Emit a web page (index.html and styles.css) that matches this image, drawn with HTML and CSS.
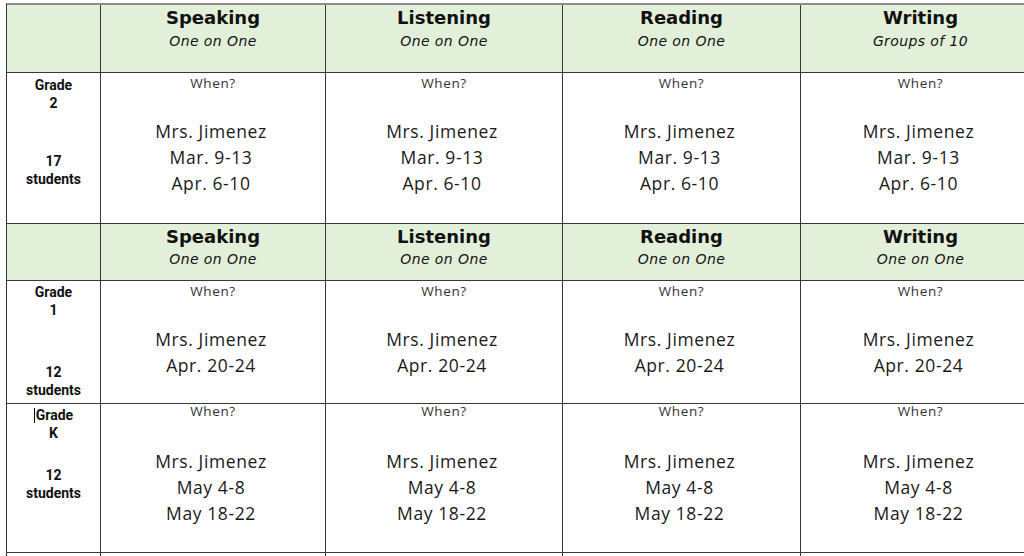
FILE: index.html
```html
<!DOCTYPE html>
<html lang="en">
<head>
<meta charset="utf-8">
<title>Assessment schedule</title>
<link rel="stylesheet" href="styles.css">
</head>
<body>
<div class="sheet">
  <!-- Header 1 -->
  <div class="cell head head-tall"></div>
  <div class="cell head head-tall"><div class="skill">Speaking</div><div class="mode">One on One</div></div>
  <div class="cell head head-tall"><div class="skill">Listening</div><div class="mode">One on One</div></div>
  <div class="cell head head-tall"><div class="skill">Reading</div><div class="mode">One on One</div></div>
  <div class="cell head head-tall"><div class="skill">Writing</div><div class="mode">Groups of 10</div></div>

  <!-- Grade 2 -->
  <div class="cell grade row-g2"><div>Grade</div><div>2</div><div class="gap-g2">17</div><div>students</div></div>
  <div class="cell slot row-g2"><div class="when">When?</div><div class="who"><div>Mrs. Jimenez</div><div>Mar. 9-13</div><div>Apr. 6-10</div></div></div>
  <div class="cell slot row-g2"><div class="when">When?</div><div class="who"><div>Mrs. Jimenez</div><div>Mar. 9-13</div><div>Apr. 6-10</div></div></div>
  <div class="cell slot row-g2"><div class="when">When?</div><div class="who"><div>Mrs. Jimenez</div><div>Mar. 9-13</div><div>Apr. 6-10</div></div></div>
  <div class="cell slot row-g2"><div class="when">When?</div><div class="who"><div>Mrs. Jimenez</div><div>Mar. 9-13</div><div>Apr. 6-10</div></div></div>

  <!-- Header 2 -->
  <div class="cell head head-short"></div>
  <div class="cell head head-short"><div class="skill">Speaking</div><div class="mode">One on One</div></div>
  <div class="cell head head-short"><div class="skill">Listening</div><div class="mode">One on One</div></div>
  <div class="cell head head-short"><div class="skill">Reading</div><div class="mode">One on One</div></div>
  <div class="cell head head-short"><div class="skill">Writing</div><div class="mode">One on One</div></div>

  <!-- Grade 1 -->
  <div class="cell grade row-g1"><div>Grade</div><div>1</div><div class="gap-g1">12</div><div>students</div></div>
  <div class="cell slot row-g1"><div class="when">When?</div><div class="who"><div>Mrs. Jimenez</div><div>Apr. 20-24</div></div></div>
  <div class="cell slot row-g1"><div class="when">When?</div><div class="who"><div>Mrs. Jimenez</div><div>Apr. 20-24</div></div></div>
  <div class="cell slot row-g1"><div class="when">When?</div><div class="who"><div>Mrs. Jimenez</div><div>Apr. 20-24</div></div></div>
  <div class="cell slot row-g1"><div class="when">When?</div><div class="who"><div>Mrs. Jimenez</div><div>Apr. 20-24</div></div></div>

  <!-- Grade K -->
  <div class="cell grade row-gk"><div><span class="caret"></span>Grade</div><div>K</div><div class="gap-gk">12</div><div>students</div></div>
  <div class="cell slot row-gk"><div class="when">When?</div><div class="who"><div>Mrs. Jimenez</div><div>May 4-8</div><div>May 18-22</div></div></div>
  <div class="cell slot row-gk"><div class="when">When?</div><div class="who"><div>Mrs. Jimenez</div><div>May 4-8</div><div>May 18-22</div></div></div>
  <div class="cell slot row-gk"><div class="when">When?</div><div class="who"><div>Mrs. Jimenez</div><div>May 4-8</div><div>May 18-22</div></div></div>
  <div class="cell slot row-gk"><div class="when">When?</div><div class="who"><div>Mrs. Jimenez</div><div>May 4-8</div><div>May 18-22</div></div></div>

  <!-- next row (cut off) -->
  <div class="cell tail"></div>
  <div class="cell tail"></div>
  <div class="cell tail"></div>
  <div class="cell tail"></div>
  <div class="cell tail"></div>
</div>
</body>
</html>
```

FILE: styles.css
```css
html, body {
  margin: 0;
  padding: 0;
  background: #ffffff;
  width: 1024px;
  height: 556px;
  overflow: hidden;
}

.sheet {
  display: grid;
  grid-template-columns: 94px 225px 237px 238px 240px;
  margin: 3px 0 0 6px;
  border-top: 2px solid #8c8c8c;
  border-left: 1px solid #333333;
  width: max-content;
}

.cell {
  border-right: 1px solid #383838;
  border-bottom: 1px solid #383838;
  text-align: center;
  box-sizing: border-box;
}

.head {
  background: #e2efd9;
  padding-top: 2px;
}

.head-tall { height: 68px; }
.head-short { height: 57px; }

.skill {
  font-family: "DejaVu Sans", sans-serif;
  font-weight: bold;
  font-size: 18px;
  line-height: 22px;
  color: #111111;
}

.mode {
  font-family: "DejaVu Sans", sans-serif;
  font-style: italic;
  font-size: 14px;
  letter-spacing: 0.4px;
  line-height: 22px;
  color: #111111;
}

.head-tall .mode { line-height: 24px; }

.row-g2 { height: 151px; }
.row-g1 { height: 123px; }
.row-gk { height: 149px; }

.slot {
  padding-top: 1px;
}

.when {
  font-family: "Open Sans", sans-serif;
  font-size: 13.5px;
  letter-spacing: 0.6px;
  line-height: 18px;
  color: #333333;
}

.who {
  margin-top: 26px;
  padding-right: 4px;
  font-family: "Open Sans", sans-serif;
  font-size: 17.5px;
  letter-spacing: 0.6px;
  line-height: 26px;
  color: #1a1a1a;
}

.row-gk.slot { padding-top: 0; }
.row-gk .when { line-height: 14px; }
.row-gk .who { margin-top: 30px; }

.grade {
  padding-top: 3px;
  font-family: Roboto, "DejaVu Sans", sans-serif;
  font-weight: 700;
  font-size: 14px;
  line-height: 18px;
  color: #111111;
}

.row-g1.grade { padding-top: 2px; }
.row-gk.grade { padding-top: 2px; }

.gap-g2 { margin-top: 40px; }
.gap-g1 { margin-top: 44px; }
.gap-gk { margin-top: 24px; }

.caret {
  display: inline-block;
  width: 0;
  height: 15px;
  border-left: 1px solid #000000;
  vertical-align: -3px;
  margin-right: 1px;
}

.tail {
  height: 20px;
}
```
